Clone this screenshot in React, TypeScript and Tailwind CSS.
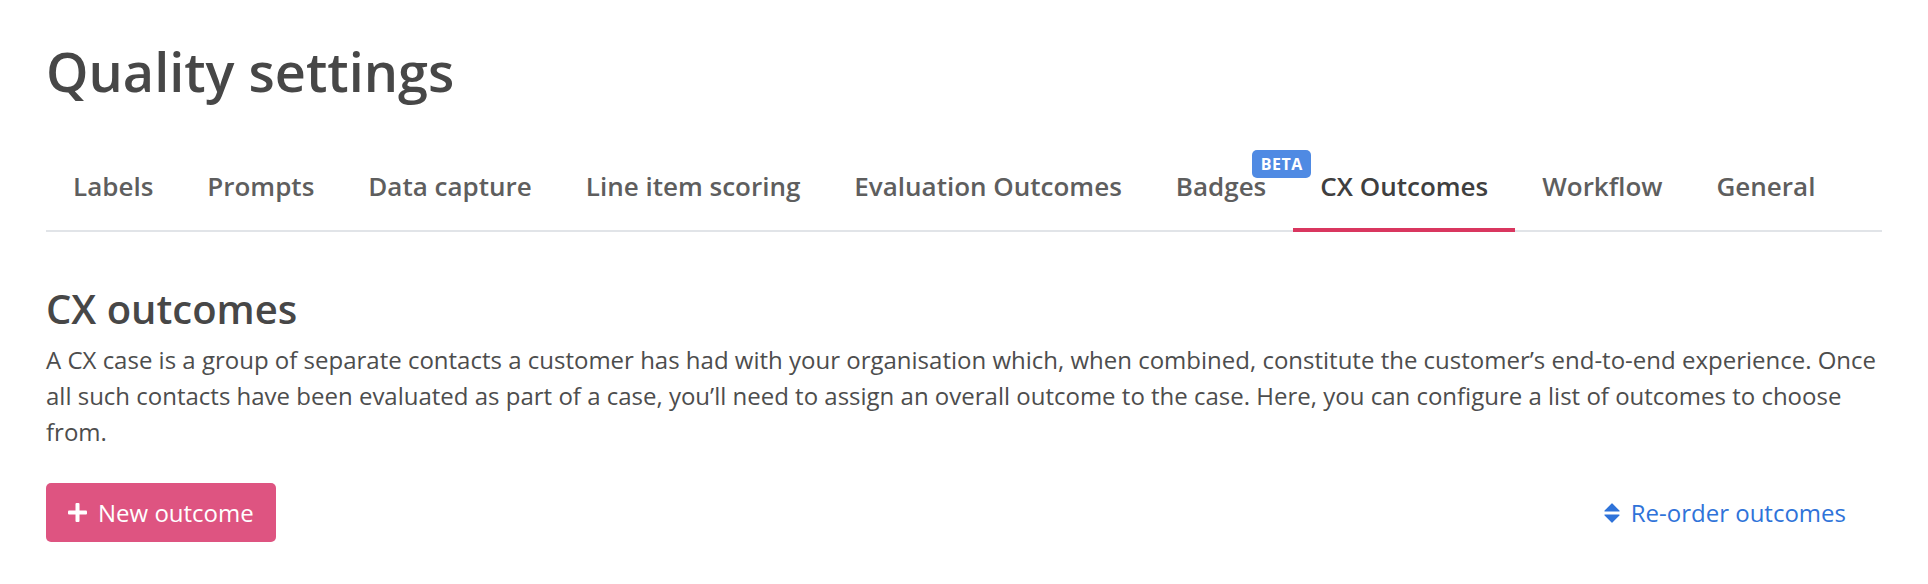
import React from "react";

const tabs = [
  "Labels",
  "Prompts",
  "Data capture",
  "Line item scoring",
  "Evaluation Outcomes",
  "Badges",
  "CX Outcomes",
  "Workflow",
  "General",
];

export default function App() {
  return (
    <div className="min-h-screen bg-white px-[46px] pt-[39px] font-['Open_Sans',sans-serif] text-[#4b4b4b]">
      <h1 className="text-[54px] leading-[65px] font-semibold text-[#474747]">Quality settings</h1>

      <div className="mt-[64px] flex border-b-2 border-[#e1e4e8]">
        {tabs.map((t) => {
          const active = t === "CX Outcomes";
          return (
            <div
              key={t}
              className={
                "relative px-[27px] pb-[26px] text-[26px] leading-[36px] font-semibold whitespace-nowrap " +
                (active ? "text-[#3f3f3f]" : "text-[#5e5e5e]")
              }
            >
              {t}
              {t === "Badges" && (
                <span className="absolute right-[-18px] top-[-18px] z-10 flex h-[28px] w-[59px] items-center justify-center rounded-[5px] bg-[#4f8ae3] text-[16px] leading-none font-bold tracking-[0.5px] text-white">
                  BETA
                </span>
              )}
              {active && <span className="absolute left-0 right-0 bottom-[-2px] h-[4px] bg-[#d9365f]" />}
            </div>
          );
        })}
      </div>

      <h2 className="mt-[53px] text-[40px] leading-[48px] font-semibold text-[#474747]">CX outcomes</h2>
      <p className="mt-[9px] text-[24px] leading-[36px] text-[#4d4d4d]">
        A CX case is a group of separate contacts a customer has had with your organisation which, when combined,
        constitute the customer’s end-to-end experience. Once all such contacts have been evaluated as part of a case,
        you’ll need to assign an overall outcome to the case. Here, you can configure a list of outcomes to choose
        from.
      </p>

      <div className="mt-[33px] flex items-center justify-between">
        <button className="flex h-[59px] w-[230px] items-center gap-[11px] rounded-[5px] bg-[#de5481] pl-[22px] text-[24px] leading-[36px] text-white">
          <svg width="19" height="19" viewBox="0 0 19 19" fill="none">
            <rect x="7.5" y="0" width="4" height="19" rx="1" fill="white" />
            <rect x="0" y="7.5" width="19" height="4" rx="1" fill="white" />
          </svg>
          <span>New outcome</span>
        </button>
        <button className="mr-[36px] flex items-center gap-[11px] text-[24px] leading-[36px] text-[#2f73d9]">
          <svg width="16" height="20" viewBox="0 0 16 20" fill="#2f73d9" stroke="#2f73d9" strokeWidth="1.2" strokeLinejoin="round">
            <polygon points="1,8 8,1 15,8" />
            <polygon points="1,12 15,12 8,19" />
          </svg>
          <span>Re-order outcomes</span>
        </button>
      </div>
    </div>
  );
}
